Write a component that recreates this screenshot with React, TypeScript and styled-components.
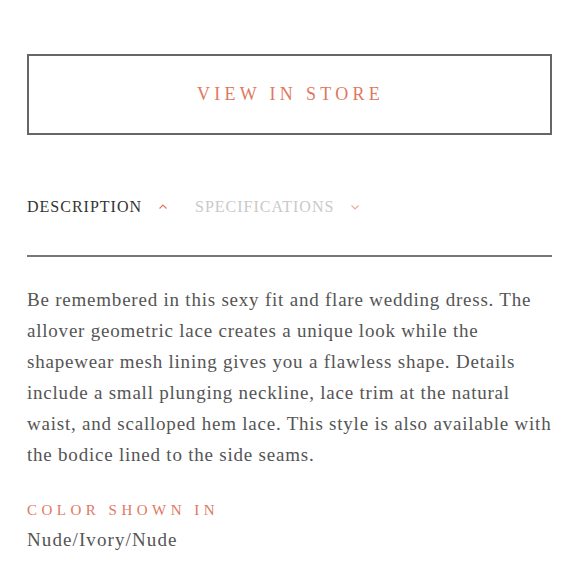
import React from "react";
import styled, { createGlobalStyle } from "styled-components";

const Global = createGlobalStyle`
  html, body { margin: 0; padding: 0; background: #fff; }
  body { font-family: "Liberation Serif", "DejaVu Serif", serif; }
`;

const Page = styled.div`
  width: 580px;
  padding: 54px 28px 0 27px;
  box-sizing: border-box;
`;

const StoreButton = styled.button`
  display: flex;
  align-items: center;
  justify-content: center;
  width: 100%;
  height: 81px;
  background: #fff;
  border: 2px solid #666;
  font-family: inherit;
  font-size: 18px;
  letter-spacing: 4.3px;
  color: #e0785f;
  padding: 0 0 0 2px;
  cursor: pointer;
`;

const Tabs = styled.div`
  display: flex;
  align-items: center;
  margin-top: 60px;
  height: 24px;
`;

const Tab = styled.div<{ $active?: boolean }>`
  display: flex;
  align-items: center;
  font-size: 16px;
  letter-spacing: 1px;
  color: ${(p) => (p.$active ? "#333" : "#c9c9c9")};
  margin-right: 27px;
  gap: 16px;
`;

const Chevron = styled.svg`
  width: 10px;
  height: 10px;
  stroke: #e0785f;
  fill: none;
  stroke-width: 1.2;
`;

const Divider = styled.hr`
  border: 0;
  border-top: 2px solid #777;
  margin: 36px 0 0 0;
`;

const Body = styled.p`
  margin: 27px -6px 0 0;
  font-size: 19px;
  line-height: 31px;
  letter-spacing: 0.78px;
  color: #555;
`;

const Label = styled.div`
  margin-top: 32px;
  font-size: 15px;
  letter-spacing: 4.5px;
  color: #e0785f;
`;

const Value = styled.div`
  margin-top: 10px;
  font-size: 19px;
  letter-spacing: 1.1px;
  color: #555;
`;

export default function App() {
  return (
    <>
      <Global />
      <Page>
        <StoreButton>VIEW IN STORE</StoreButton>
        <Tabs>
          <Tab $active>
            DESCRIPTION
            <Chevron viewBox="0 0 10 10">
              <polyline points="1.5,6.5 5,3 8.5,6.5" />
            </Chevron>
          </Tab>
          <Tab>
            SPECIFICATIONS
            <Chevron viewBox="0 0 10 10" style={{ opacity: 0.6 }}>
              <polyline points="1.5,3.5 5,7 8.5,3.5" />
            </Chevron>
          </Tab>
        </Tabs>
        <Divider />
        <Body>
          Be remembered in this sexy fit and flare wedding dress. The allover
          geometric lace creates a unique look while the shapewear mesh lining
          gives you a flawless shape. Details include a small plunging
          neckline, lace trim at the natural waist, and scalloped hem lace.
          This style is also available with the bodice lined to the side
          seams.
        </Body>
        <Label>COLOR SHOWN IN</Label>
        <Value>Nude/Ivory/Nude</Value>
      </Page>
    </>
  );
}
